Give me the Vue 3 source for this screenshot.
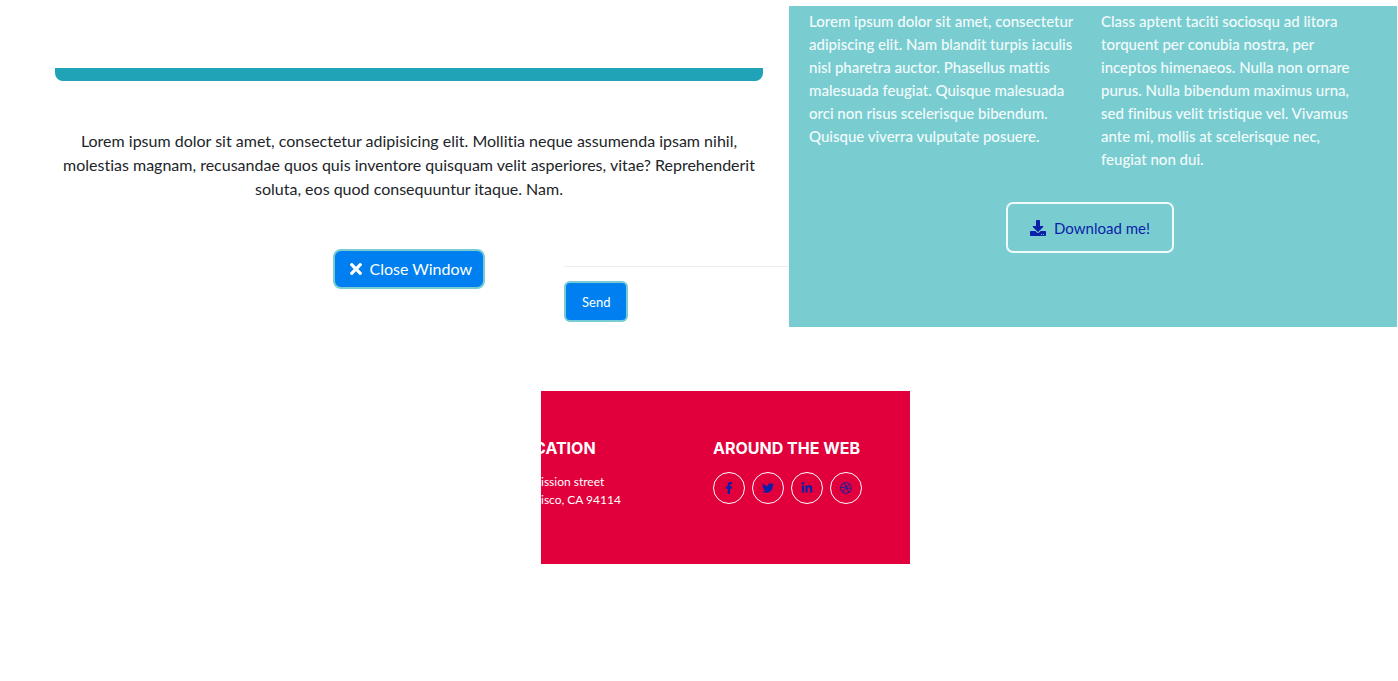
<script setup>
const socials = [
  {
    name: 'Facebook',
    box: '0 0 320 512',
    path: 'M279.14 288l14.22-92.66h-88.91v-60.13c0-25.35 12.42-50.06 52.24-50.06h40.42V6.26S260.43 0 225.36 0c-73.22 0-121.08 44.38-121.08 124.72v70.62H22.89V288h81.39v224h100.17V288z'
  },
  {
    name: 'Twitter',
    box: '0 0 512 512',
    path: 'M459.37 151.716c.325 4.548.325 9.097.325 13.645 0 138.72-105.583 298.558-298.558 298.558-59.452 0-114.68-17.219-161.137-47.106 8.447.974 16.568 1.299 25.34 1.299 49.055 0 94.213-16.568 130.274-44.832-46.132-.975-84.792-31.188-98.112-72.772 6.498.974 12.995 1.624 19.818 1.624 9.421 0 18.843-1.3 27.614-3.573-48.081-9.747-84.143-51.98-84.143-102.985v-1.299c13.969 7.797 30.214 12.67 47.431 13.319-28.264-18.843-46.781-51.005-46.781-87.391 0-19.492 5.197-37.36 14.294-52.954 51.655 63.675 129.3 105.258 216.365 109.807-1.624-7.797-2.599-15.918-2.599-24.04 0-57.828 46.782-104.934 104.934-104.934 30.213 0 57.502 12.67 76.67 33.137 23.715-4.548 46.456-13.32 66.599-25.34-7.798 24.366-24.366 44.833-46.132 57.827 21.117-2.273 41.584-8.122 60.426-16.243-14.292 20.791-32.161 39.308-52.628 54.253z'
  },
  {
    name: 'LinkedIn',
    box: '0 0 448 512',
    path: 'M100.28 448H7.4V148.9h92.88zM53.79 108.1C24.09 108.1 0 83.5 0 53.8a53.79 53.79 0 0 1 107.58 0c0 29.7-24.1 54.3-53.79 54.3zM447.9 448h-92.68V302.4c0-34.7-.7-79.2-48.29-79.2-48.29 0-55.69 37.7-55.69 76.7V448h-92.78V148.9h89.08v40.8h1.3c12.4-23.5 42.69-48.3 87.88-48.3 94 0 111.28 61.9 111.28 142.3V448z'
  },
  {
    name: 'Dribbble',
    box: '0 0 512 512',
    path: 'M256 8C119.252 8 8 119.252 8 256s111.252 248 248 248 248-111.252 248-248S392.748 8 256 8zm163.97 114.366c29.503 36.046 47.369 81.957 47.835 131.955-6.984-1.477-77.018-15.682-147.502-6.818-5.752-14.041-11.181-26.393-18.617-41.614 78.321-31.977 113.818-77.482 118.284-83.523zM396.421 97.87c-3.81 5.427-35.697 48.286-111.021 76.519-34.712-63.776-73.185-116.168-79.04-124.008 67.176-16.193 137.966 1.27 190.061 47.489zm-230.48-33.25c5.585 7.659 43.438 60.116 78.537 122.509-99.087 26.313-186.36 25.934-195.834 25.809C62.38 147.205 106.678 92.573 165.941 64.62zM44.17 256.323c0-2.166.043-4.322.108-6.473 9.268.19 111.92 1.513 217.706-30.146 6.064 11.868 11.857 23.915 17.174 35.949-76.599 21.575-146.194 83.527-180.531 142.306C64.794 360.405 44.17 310.73 44.17 256.323zm81.807 167.113c22.127-45.233 82.178-103.622 167.579-132.756 29.74 77.283 42.039 142.053 45.189 160.638-68.112 29.013-150.015 21.053-212.768-27.882zm248.38 8.489c-2.171-12.886-13.446-74.897-41.152-151.033 66.38-10.626 124.7 6.768 131.947 9.055-9.442 58.941-43.273 109.844-90.795 141.978z'
  }
]
</script>

<template>
  <main class="page">
    <div class="top">
      <section class="modal">
        <div class="bar"></div>
        <p class="intro">Lorem ipsum dolor sit amet, consectetur adipisicing elit. Mollitia neque assumenda ipsam nihil, molestias magnam, recusandae quos quis inventore quisquam velit asperiores, vitae? Reprehenderit soluta, eos quod consequuntur itaque. Nam.</p>
        <div class="actions">
          <div class="close-cell">
            <button class="close" type="button">
              <svg width="12" height="18" viewBox="0 0 352 512" aria-hidden="true"><path fill="currentColor" d="M242.72 256l100.07-100.07c12.28-12.28 12.28-32.19 0-44.48l-22.24-22.24c-12.28-12.28-32.19-12.28-44.48 0L176 189.28 75.93 89.21c-12.28-12.28-32.19-12.28-44.48 0L9.21 111.45c-12.28 12.28-12.28 32.19 0 44.48L109.28 256 9.21 356.07c-12.28 12.28-12.28 32.19 0 44.48l22.24 22.24c12.28 12.28 32.2 12.28 44.48 0L176 322.72l100.07 100.07c12.28 12.28 32.2 12.28 44.48 0l22.24-22.24c12.28-12.28 12.28-32.19 0-44.48L242.72 256z"/></svg>
              <span>Close Window</span>
            </button>
          </div>
          <div class="send-cell">
            <button class="send" type="button">Send</button>
          </div>
        </div>
      </section>

      <section class="about">
        <div class="columns">
          <p>Lorem ipsum dolor sit amet, consectetur adipiscing elit. Nam blandit turpis iaculis nisl pharetra auctor. Phasellus mattis malesuada feugiat. Quisque malesuada orci non risus scelerisque bibendum. Quisque viverra vulputate posuere.</p>
          <p>Class aptent taciti sociosqu ad litora torquent per conubia nostra, per inceptos himenaeos. Nulla non ornare purus. Nulla bibendum maximus urna, sed finibus velit tristique vel. Vivamus ante mi, mollis at scelerisque nec, feugiat non dui.</p>
        </div>
        <button class="download" type="button">
          <svg width="16" height="16" viewBox="0 0 512 512" aria-hidden="true"><path fill="currentColor" d="M216 0h80c13.3 0 24 10.7 24 24v168h87.7c17.8 0 26.7 21.5 14.1 34.1L269.7 378.3c-7.5 7.5-19.8 7.5-27.3 0L90.1 226.1c-12.6-12.6-3.7-34.1 14.1-34.1H192V24c0-13.3 10.7-24 24-24zm296 376v112c0 13.3-10.7 24-24 24H24c-13.3 0-24-10.7-24-24V376c0-13.3 10.7-24 24-24h146.7l49 49c20.1 20.1 52.5 20.1 72.6 0l49-49H488c13.3 0 24 10.7 24 24zm-124 88c0-11-9-20-20-20s-20 9-20 20 9 20 20 20 20-9 20-20zm64 0c0-11-9-20-20-20s-20 9-20 20 9 20 20 20 20-9 20-20z"/></svg>
          <span>Download me!</span>
        </button>
      </section>
    </div>

    <div class="bottom">
      <footer class="footer">
        <section class="location">
          <h2>CATION</h2>
          <p>ission street<br>isco, CA 94114</p>
        </section>
        <section class="web">
          <h2>AROUND THE WEB</h2>
          <nav class="socials" aria-label="Around the web">
            <a v-for="s in socials" :key="s.name" href="#" :aria-label="s.name">
              <svg height="12" width="12" :viewBox="s.box" aria-hidden="true"><path fill="currentColor" :d="s.path" /></svg>
            </a>
          </nav>
        </section>
      </footer>
    </div>
  </main>
</template>

<style>
body {
  background: #fff;
}
</style>

<style scoped>
.page {
  font-family: Lato, "Liberation Sans", sans-serif;
  font-size: 16px;
  line-height: 24px;
  font-variant-ligatures: none;
  color: #212529;
}
p,
h2 {
  margin: 0;
}
button {
  font-family: inherit;
  cursor: pointer;
}
.top {
  display: grid;
  grid-template-columns: 789fr 608fr;
  padding: 6px 1px 0 0;
}
.modal {
  padding: 62px 0 0 55px;
}
.bar {
  height: 13px;
  margin-right: 26px;
  border-radius: 0 0 8px 8px;
  background: #21a3b7;
}
.intro {
  margin: 48px 26px 0 0;
  text-align: center;
}
.actions {
  display: grid;
  grid-template-columns: 1fr 225px;
  margin-top: 48px;
}
.close-cell {
  display: flex;
  justify-content: flex-end;
  align-items: flex-start;
  padding-right: 79px;
}
.close {
  display: flex;
  align-items: center;
  gap: 7px;
  height: 40px;
  padding: 0 11px 1px 15px;
  border: 2px solid #77cdd1;
  border-radius: 8px;
  background: #007ff0;
  color: #fff;
  font-size: 16px;
}
.send-cell {
  margin-top: 17px;
  padding-top: 14px;
  border-top: 1px solid #ececee;
}
.send {
  display: block;
  height: 41px;
  padding: 0 16px;
  border: 2px solid #77cdd1;
  border-radius: 6px;
  background: #007ff0;
  color: #fff;
  font-size: 13px;
}
.about {
  display: flex;
  flex-direction: column;
  align-items: center;
  padding: 4px 26px 74px 20px;
  background: #79cdd1;
  color: #f3fbfb;
}
.columns {
  display: grid;
  grid-template-columns: 1fr 1fr;
  gap: 22px;
  width: 100%;
  font-size: 15px;
  font-weight: 500;
  line-height: 23px;
}
.columns p + p {
  padding-right: 4px;
}
.download {
  display: flex;
  align-items: center;
  gap: 8px;
  height: 51px;
  margin-top: 31px;
  padding: 0 22px;
  border: 2px solid #f1fafa;
  border-radius: 7px;
  background: transparent;
  color: #0b1fa8;
  font-size: 15px;
}
.bottom {
  display: grid;
  grid-template-columns: 541fr 369fr 488fr;
  margin-top: 64px;
}
.footer {
  grid-column: 2;
  display: flex;
  justify-content: space-between;
  padding: 48px 48px 55px 0;
  overflow: hidden;
  background: #e1003c;
  color: #fff;
}
h2 {
  font-family: Inter, "Open Sans", sans-serif;
  font-size: 16px;
  line-height: 18px;
  font-weight: 700;
}
.location h2 {
  text-indent: -7px;
}
.location p {
  margin-top: 16px;
  font-size: 12px;
  line-height: 18px;
}
.socials {
  display: flex;
  gap: 7px;
  margin-top: 15px;
}
.socials a {
  display: flex;
  align-items: center;
  justify-content: center;
  box-sizing: border-box;
  width: 32px;
  height: 32px;
  border: 1px solid #fff;
  border-radius: 50%;
  color: #0b1fa8;
}
</style>
